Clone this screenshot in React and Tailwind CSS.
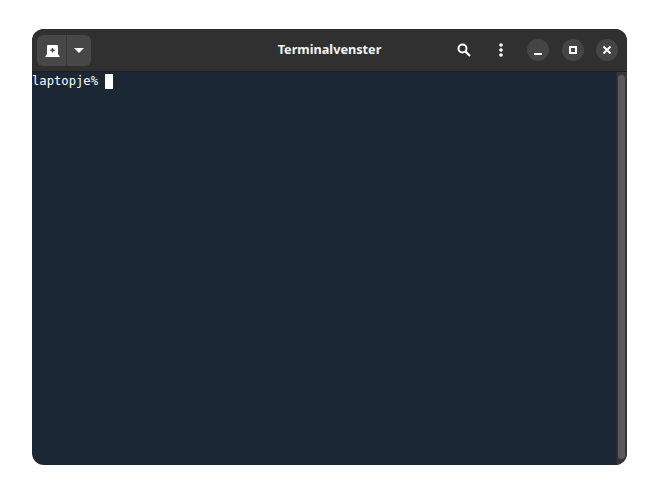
import React from 'react';

const WindowButton = ({ children }) => (
  <div className="flex h-[22px] w-[22px] items-center justify-center rounded-full bg-[#454545]">
    {children}
  </div>
);

export default function App() {
  return (
    <div className="h-[500px] w-[658px] bg-white pl-[32px] pt-[29px]">
      <div className="flex h-[436px] w-[595px] flex-col overflow-hidden rounded-[12px] bg-[#1c2735]">
        {/* Header bar */}
        <div className="grid h-[43px] shrink-0 grid-cols-[1fr_auto_1fr] items-center border-b border-[#1c1c1c] bg-[#303030] pl-[5px]">
          <div className="flex h-[31px] w-[54px] overflow-hidden rounded-[6px] bg-[#474747]">
            <div className="flex w-[30px] items-center justify-center border-r border-[#383838] pl-[2px]">
              <svg width="15" height="12" viewBox="0 0 15 12" className="mt-px">
                <path
                  fill="#ffffff"
                  fillRule="evenodd"
                  d="M3 0h9a1 1 0 0 1 1 1v8l2 3H0l2-3V1a1 1 0 0 1 1-1ZM6.8 3v1.5H5.3v1.4h1.5v1.5h1.4V5.9h1.5V4.5H8.2V3Z"
                />
              </svg>
            </div>
            <div className="flex flex-1 items-center justify-center">
              <svg width="10" height="5" viewBox="0 0 10 5">
                <path fill="#ffffff" d="M0 0h10L5 5Z" />
              </svg>
            </div>
          </div>
          <div className="pr-[5px] text-center font-['Noto_Sans',sans-serif] text-[12.7px] font-bold text-[#f4f4f4]">
            Terminalvenster
          </div>
          <div className="flex items-center justify-end pr-[9px]">
            <svg width="14" height="14" viewBox="0 0 14 14" fill="none" className="mr-[28px]">
              <circle cx="5.5" cy="5.5" r="4" stroke="#ffffff" strokeWidth="2" />
              <path d="M8.6 8.6 13 13" stroke="#ffffff" strokeWidth="2.2" />
            </svg>
            <svg width="4" height="14" viewBox="0 0 4 14" className="mr-[24px]">
              <circle cx="2" cy="2" r="1.8" fill="#ffffff" />
              <circle cx="2" cy="7" r="1.8" fill="#ffffff" />
              <circle cx="2" cy="12" r="1.8" fill="#ffffff" />
            </svg>
            <div className="flex items-center gap-[12.5px]">
              <WindowButton>
                <div className="mt-[7px] h-[2px] w-[8px] bg-white" />
              </WindowButton>
              <WindowButton>
                <div className="h-[8px] w-[8px] border-2 border-white" />
              </WindowButton>
              <WindowButton>
                <svg width="10" height="10" viewBox="0 0 10 10">
                  <path d="M1.5 1.5l7 7M8.5 1.5l-7 7" stroke="#ffffff" strokeWidth="2" />
                </svg>
              </WindowButton>
            </div>
          </div>
        </div>

        {/* Terminal body */}
        <div className="flex min-h-0 flex-1">
          <div className="flex flex-1 items-start pt-[2px] font-['DejaVu_Sans_Mono',monospace] text-[12.2px] leading-[15px] text-white">
            <span>laptopje%</span>
            <span className="ml-[7px] h-[15px] w-[8px] bg-white" />
          </div>
          <div className="w-[11px] shrink-0 border-l border-[#2a2a2a] bg-[#363636] pb-[6px] pl-px pr-[2px] pt-[3px]">
            <div className="h-full rounded-full bg-[#5a5a5a]" />
          </div>
        </div>
      </div>
    </div>
  );
}
